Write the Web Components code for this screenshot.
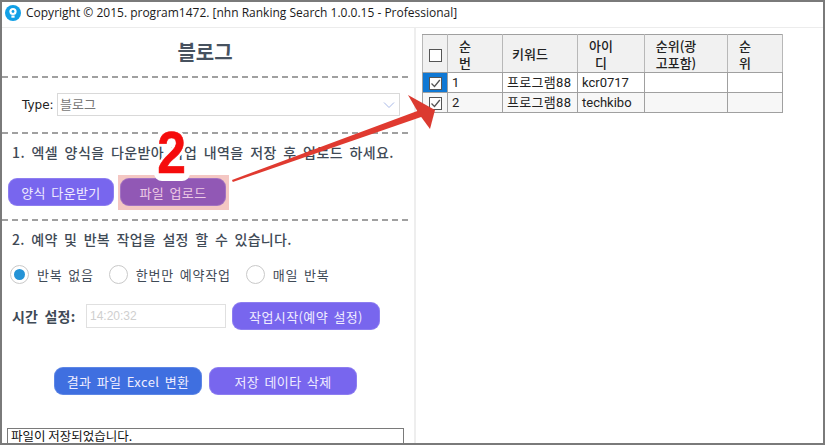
<!DOCTYPE html>
<html>
<head>
<meta charset="utf-8">
<style>
html, body { margin: 0; padding: 0; background: #fff; }
</style>
</head>
<body>
<app-window>
    <title-bar>Copyright © 2015. program1472. [nhn Ranking Search 1.0.0.15 - Professional]</title-bar>
    <left-panel slot="left">
        <panel-title>블로그</panel-title>
        <panel-section height="56">
            <type-select></type-select>
        </panel-section>
        <panel-section height="87">
            <step-label>1. 엑셀 양식을 다운받아 작업 내역을 저장 후 업로드 하세요.</step-label>
            <button-row gap="6" left="6" top="16">
                <pill-button width="106">양식 다운받기</pill-button>
                <high-light><pill-button width="106" color="#9158b5" ink="#ecc9e4">파일 업로드</pill-button></high-light>
            </button-row>
        </panel-section>
        <schedule-section></schedule-section>
        <button-row gap="7" left="52" top="37">
            <pill-button width="148" color="#3f6fe0">결과 파일 Excel 변환</pill-button>
            <pill-button width="148">저장 데이타 삭제</pill-button>
        </button-row>
        <status-box>파일이 저장되었습니다.</status-box>
    </left-panel>
    <keyword-table slot="right"></keyword-table>
    <note-layer slot="over"></note-layer>
</app-window>

<script>
const fontStack = `"Noto Sans CJK KR", "Noto Sans", sans-serif`

class AppWindow extends HTMLElement
{
    constructor()
    {
        super()
        this.attachShadow({mode: "open"})
        this.shadowRoot.innerHTML = `
<style>
:host
{
    display: flex;
    flex-direction: column;
    position: relative;
    box-sizing: border-box;
    width: 825px;
    height: 445px;
    overflow: hidden;
    background: #fff;
    border: 2px solid #7a7a7a;
    font-family: ${fontStack};
}
#main
{
    display: grid;
    grid-template-columns: 414px 1fr;
    flex: 1;
    min-height: 0;
}
#left
{
    box-sizing: border-box;
    border-right: 2px solid #eeeeee;
    min-height: 0;
    display: flex;
    flex-direction: column;
}
</style>
<slot></slot>
<div id="main">
    <div id="left"><slot name="left"></slot></div>
    <div id="right"><slot name="right"></slot></div>
</div>
<slot name="over"></slot>
`
    }
}

class TitleBar extends HTMLElement
{
    constructor()
    {
        super()
        this.attachShadow({mode: "open"})
        this.shadowRoot.innerHTML = `
<style>
:host
{
    display: flex;
    align-items: center;
    gap: 5px;
    height: 26px;
    padding: 0 0 4px 3px;
    box-sizing: border-box;
    border-bottom: 1px solid #ececec;
    font: 12px "Open Sans", sans-serif;
    color: #1a1a1a;
    white-space: nowrap;
}
svg { flex: none; }
</style>
<svg width="16" height="16" viewBox="0 0 16 16">
    <circle cx="8" cy="8" r="8" fill="#12a0e6"/>
    <circle cx="8" cy="6.5" r="3.6" fill="#fff"/>
    <path d="M6.4 10.5h3.2v2.2H6.4z" fill="#fff"/>
    <circle cx="8" cy="6.5" r="1.4" fill="#12a0e6"/>
</svg>
<slot></slot>
`
    }
}

class LeftPanel extends HTMLElement
{
    constructor()
    {
        super()
        this.attachShadow({mode: "open"})
        this.shadowRoot.innerHTML = `
<style>
:host
{
    display: flex;
    flex-direction: column;
    flex: 1;
    min-height: 0;
}
</style>
<slot></slot>
`
    }
}

class PanelTitle extends HTMLElement
{
    constructor()
    {
        super()
        this.attachShadow({mode: "open"})
        this.shadowRoot.innerHTML = `
<style>
:host
{
    display: flex;
    align-items: center;
    justify-content: center;
    box-sizing: border-box;
    height: 50px;
    margin-right: 6px;
    padding-bottom: 2px;
    border-bottom: 2px dashed #a0a0a0;
    font-size: 20px;
    font-weight: 700;
    color: #47525f;
}
</style>
<slot></slot>
`
    }
}

class PanelSection extends HTMLElement
{
    constructor()
    {
        super()
        this.attachShadow({mode: "open"})
        this.shadowRoot.innerHTML = `
<style>
:host
{
    display: block;
    box-sizing: border-box;
    margin-right: 6px;
    border-bottom: 2px dashed #a0a0a0;
}
</style>
<slot></slot>
`
        this.style.height = this.getAttribute('height') + 'px'
    }
}

class TypeSelect extends HTMLElement
{
    constructor()
    {
        super()
        this.attachShadow({mode: "open"})
        this.shadowRoot.innerHTML = `
<style>
:host
{
    display: flex;
    align-items: center;
    padding: 15px 0 0 20px;
    font-size: 13px;
}
#label { width: 35px; color: #222; font-family: "DejaVu Sans", sans-serif; font-size: 12px; }
#box
{
    display: flex;
    align-items: center;
    justify-content: space-between;
    box-sizing: border-box;
    width: 343px;
    height: 23px;
    padding: 0 4px 0 2px;
    border: 1px solid #d9d9d9;
    color: #777;
}
#box span { padding-bottom: 3px; }
</style>
<span id="label">Type:</span>
<div id="box">
    <span>블로그</span>
    <svg width="12" height="8" viewBox="0 0 12 8"><path d="M1 1.5l5 5 5-5" fill="none" stroke="#a9b9e8"/></svg>
</div>
`
    }
}

class StepLabel extends HTMLElement
{
    constructor()
    {
        super()
        this.attachShadow({mode: "open"})
        this.shadowRoot.innerHTML = `
<style>
:host
{
    display: block;
    padding: 8px 0 0 10px;
    font-size: 14px;
    font-weight: 500;
    line-height: 20px;
    letter-spacing: 0.4px;
    color: #3f4a56;
    word-spacing: 3px;
    white-space: nowrap;
}
</style>
<slot></slot>
`
    }
}

class ButtonRow extends HTMLElement
{
    constructor()
    {
        super()
        this.attachShadow({mode: "open"})
        this.shadowRoot.innerHTML = `
<style>
:host
{
    display: flex;
}
</style>
<slot></slot>
`
        this.style.gap = this.getAttribute('gap') + 'px'
        this.style.paddingLeft = this.getAttribute('left') + 'px'
        this.style.paddingTop = this.getAttribute('top') + 'px'
    }
}

// pink marker behind a button, does not take room in the row
class HighLight extends HTMLElement
{
    constructor()
    {
        super()
        this.attachShadow({mode: "open"})
        this.shadowRoot.innerHTML = `
<style>
:host
{
    display: block;
    margin: -3px -3px -4px -2px;
    padding: 3px 3px 4px 2px;
    background: #f4c7c3;
}
</style>
<slot></slot>
`
    }
}

class PillButton extends HTMLElement
{
    constructor()
    {
        super()
        this.attachShadow({mode: "open"})
        this.shadowRoot.innerHTML = `
<style>
:host
{
    display: flex;
    align-items: center;
    justify-content: center;
    box-sizing: border-box;
    height: 28px;
    border-radius: 9px;
    background: var(--fill, #7866ee);
    color: var(--ink, #f0edff);
    box-shadow: inset 0 0 0 1px rgba(255, 255, 255, 0.16);
    font-size: 13px;
    letter-spacing: 0.4px;
    word-spacing: 2px;
    white-space: nowrap;
}
</style>
<slot></slot>
`
        if (this.hasAttribute('width'))
            this.style.width = this.getAttribute('width') + 'px'
        if (this.hasAttribute('color'))
            this.style.setProperty('--fill', this.getAttribute('color'))
        if (this.hasAttribute('ink'))
            this.style.setProperty('--ink', this.getAttribute('ink'))
    }
}

class RadioOption extends HTMLElement
{
    constructor()
    {
        super()
        this.attachShadow({mode: "open"})
        this.shadowRoot.innerHTML = `
<style>
:host
{
    display: flex;
    align-items: center;
    gap: 8px;
    font-size: 13px;
    line-height: 19px;
    letter-spacing: 0.8px;
    color: #3f4a56;
    word-spacing: 2px;
}
#dot
{
    display: flex;
    align-items: center;
    justify-content: center;
    box-sizing: border-box;
    width: 19px;
    height: 19px;
    border-radius: 50%;
    border: 1px solid #c9c9c9;
}
:host([checked]) #dot::after
{
    content: "";
    width: 11px;
    height: 11px;
    border-radius: 50%;
    background: #2593d6;
}
</style>
<div id="dot"></div>
<slot></slot>
`
    }
}

class ScheduleSection extends HTMLElement
{
    constructor()
    {
        super()
        this.attachShadow({mode: "open"})
        this.shadowRoot.innerHTML = `
<style>
:host
{
    display: block;
    font-size: 14px;
}
#heading
{
    padding: 8px 0 0 10px;
    line-height: 20px;
    font-weight: 500;
    letter-spacing: 0.3px;
    color: #3f4a56;
    word-spacing: 3px;
}
#radios
{
    display: flex;
    gap: 15px;
    padding: 16px 0 0 8px;
}
#time
{
    display: flex;
    align-items: center;
    padding: 18px 0 0 10px;
}
#time label
{
    width: 74px;
    font-weight: 700;
    color: #3f4a56;
    word-spacing: 3px;
    letter-spacing: 0.2px;
}
#clock
{
    box-sizing: border-box;
    width: 140px;
    height: 24px;
    padding-left: 3px;
    border: 1px solid #e0e0e0;
    font: 12px/22px "Liberation Sans", sans-serif;
    color: #cfcfcf;
}
pill-button { margin-left: 6px; width: 148px; }
</style>
<div id="heading">2. 예약 및 반복 작업을 설정 할 수 있습니다.</div>
<div id="radios">
    <radio-option checked>반복 없음</radio-option>
    <radio-option>한번만 예약작업</radio-option>
    <radio-option>매일 반복</radio-option>
</div>
<div id="time">
    <label>시간 설정:</label>
    <div id="clock">14:20:32</div>
    <pill-button>작업시작(예약 설정)</pill-button>
</div>
`
    }
}

class StatusBox extends HTMLElement
{
    constructor()
    {
        super()
        this.attachShadow({mode: "open"})
        this.shadowRoot.innerHTML = `
<style>
:host
{
    display: block;
    box-sizing: border-box;
    margin: auto 10px 0 5px;
    height: 15px;
    padding-left: 3px;
    border: 1px solid #7a7a7a;
    border-bottom: none;
    font-size: 12.5px;
    line-height: 13px;
    color: #111;
}
</style>
<slot></slot>
`
    }
}

class KeywordTable extends HTMLElement
{
    constructor()
    {
        super()
        this.attachShadow({mode: "open"})

        const check = on => `
            <span class="check">${on ? '<svg width="11" height="11" viewBox="0 0 11 11"><path d="M1.5 5.5l3 3L9.8 2" fill="none" stroke="#555" stroke-width="1.3"/></svg>' : ''}</span>`

        this.shadowRoot.innerHTML = `
<style>
:host
{
    display: block;
    padding: 6px 0 0 6px;
}
table
{
    border-collapse: collapse;
    table-layout: fixed;
    width: 360px;
    font-size: 13px;
    color: #222;
}
th, td
{
    padding: 0 0 0 4px;
    border: 1px solid #a0a0a0;
    overflow: hidden;
    box-sizing: border-box;
}
th
{
    height: 38px;
    padding: 0 20px 0 0;
    background: #f1f1f1;
    border-color: #a0a0a0 #b8b8b8;
    font-weight: 500;
    line-height: 17px;
    text-align: center;
}
td
{
    height: 20px;
    line-height: 18px;
    white-space: nowrap;
    font-family: Roboto, "Noto Sans CJK KR", sans-serif;
}
td.kw { letter-spacing: 0.3px; }
tr:nth-child(3) td { background: #f7f7f7; }
td.mark, th.mark { padding: 0; text-align: center; }
td.selected, tr:nth-child(2) td.selected { background: #0f78d4; }
.check
{
    display: inline-flex;
    vertical-align: middle;
    box-sizing: border-box;
    width: 13px;
    height: 13px;
    border: 1px solid #555;
    background: #fff;
}
</style>
<table>
    <colgroup>
        <col style="width:25px"><col style="width:55px"><col style="width:75px">
        <col style="width:67px"><col style="width:83px"><col style="width:55px">
    </colgroup>
    <tr>
        <th class="mark">${check(false)}</th>
        <th>순<br>번</th>
        <th>키워드</th>
        <th>아이<br>디</th>
        <th>순위(광<br>고포함)</th>
        <th>순<br>위</th>
    </tr>
    <tr>
        <td class="mark selected">${check(true)}</td>
        <td>1</td><td class="kw">프로그램88</td><td>kcr0717</td><td></td><td></td>
    </tr>
    <tr>
        <td class="mark">${check(true)}</td>
        <td>2</td><td class="kw">프로그램88</td><td>techkibo</td><td></td><td></td>
    </tr>
</table>
`
    }
}

class NoteLayer extends HTMLElement
{
    constructor()
    {
        super()
        this.attachShadow({mode: "open"})
        this.shadowRoot.innerHTML = `
<style>
:host
{
    position: absolute;
    left: -2px;
    top: -2px;
    width: 825px;
    height: 445px;
    pointer-events: none;
}
#bump
{
    position: absolute;
    left: 154px;
    top: 168px;
    width: 36px;
    height: 13px;
    background: #fff;
    border-radius: 0 0 8px 8px;
}
#num
{
    position: absolute;
    left: 154px;
    top: 129px;
    width: 36px;
    height: 44px;
    display: flex;
    justify-content: center;
}
#num span
{
    font: 700 60px/47px "Liberation Sans", sans-serif;
    color: #f50c0c;
    -webkit-text-stroke: 0.6px #f50c0c;
    text-shadow: 3px 0 #fff, -3px 0 #fff, 0 3px #fff, 0 -3px #fff, 2px 2px #fff, -2px 2px #fff, 2px -2px #fff, -2px -2px #fff;
    transform: scaleX(0.86);
}
svg { position: absolute; left: 0; top: 0; }
</style>
<div id="bump"></div>
<div id="num"><span>2</span></div>
<svg width="825" height="445" viewBox="0 0 825 445">
    <path d="M232 180L232.8 182L424 116L420 110Z" fill="#e03a30"/>
    <path d="M408 95L435 110L430 129L419 114Z" fill="#db3a30"/>
</svg>
`
    }
}

window.customElements.define('app-window', AppWindow)
window.customElements.define('title-bar', TitleBar)
window.customElements.define('left-panel', LeftPanel)
window.customElements.define('panel-title', PanelTitle)
window.customElements.define('panel-section', PanelSection)
window.customElements.define('type-select', TypeSelect)
window.customElements.define('step-label', StepLabel)
window.customElements.define('button-row', ButtonRow)
window.customElements.define('high-light', HighLight)
window.customElements.define('pill-button', PillButton)
window.customElements.define('radio-option', RadioOption)
window.customElements.define('schedule-section', ScheduleSection)
window.customElements.define('status-box', StatusBox)
window.customElements.define('keyword-table', KeywordTable)
window.customElements.define('note-layer', NoteLayer)
</script>
</body>
</html>
